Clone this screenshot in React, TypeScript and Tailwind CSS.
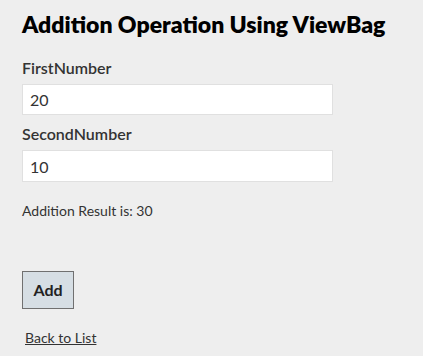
export default function App() {
  return (
    <div className="min-h-[356px] bg-[#eeeeee] px-[22px] pt-[8px] text-[#333333] [font-family:Lato,sans-serif]">
      <h1 className="whitespace-nowrap text-[23px] font-extrabold leading-[32px] text-black">Addition Operation Using ViewBag</h1>

      <div className="mt-[18px]">
        <label className="block text-[16px] font-semibold leading-[20px]">FirstNumber</label>
        <input
          defaultValue="20"
          className="mt-[6px] block h-[31px] w-[311px] border border-[#e0e0e0] bg-white px-[7px] text-[16px] text-[#333333] outline-none"
        />
      </div>

      <div className="mt-[9px]">
        <label className="block text-[16px] font-semibold leading-[20px]">SecondNumber</label>
        <input
          defaultValue="10"
          className="mt-[6px] block h-[32px] w-[311px] border border-[#e0e0e0] bg-white px-[7px] text-[16px] text-[#333333] outline-none"
        />
      </div>

      <p className="mt-[20px] text-[14px] leading-[18px]">Addition Result is: 30</p>

      <button className="mt-[51px] block h-[38px] w-[52px] border border-[#707070] bg-[#d6dee4] text-[16px] font-bold text-[#222222]">
        Add
      </button>

      <a href="#" className="mt-[20px] ml-[3px] inline-block text-[14px] leading-[18px] text-[#333333] underline">
        Back to List
      </a>
    </div>
  )
}
